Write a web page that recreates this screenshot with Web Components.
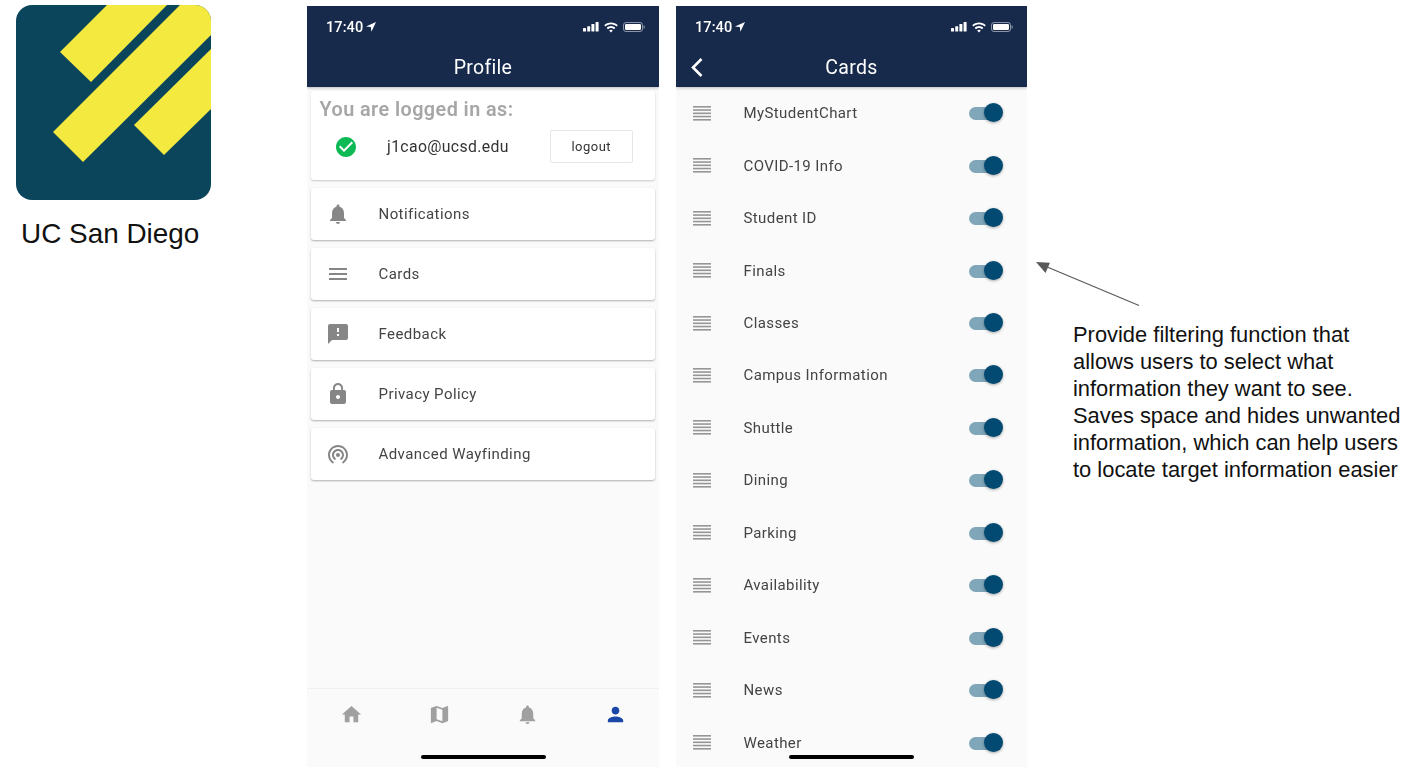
<!DOCTYPE html>
<html lang="en"><head><meta charset="utf-8"><title>UC San Diego app</title>
<style>html,body{margin:0;background:#fff;overflow:hidden}</style></head>
<body>
<demo-page>
  <logo-panel>UC San Diego</logo-panel>
  <phone-screen title="Profile">
    <login-card email="j1cao@ucsd.edu"></login-card>
    <menu-card icon="bell">Notifications</menu-card>
    <menu-card icon="menu">Cards</menu-card>
    <menu-card icon="feedback">Feedback</menu-card>
    <menu-card icon="lock">Privacy Policy</menu-card>
    <menu-card icon="tether">Advanced Wayfinding</menu-card>
    <bottom-nav slot="footer"></bottom-nav>
  </phone-screen>
  <phone-screen title="Cards" back list>
    <card-row>MyStudentChart</card-row>
    <card-row>COVID-19 Info</card-row>
    <card-row>Student ID</card-row>
    <card-row>Finals</card-row>
    <card-row>Classes</card-row>
    <card-row>Campus Information</card-row>
    <card-row>Shuttle</card-row>
    <card-row>Dining</card-row>
    <card-row>Parking</card-row>
    <card-row>Availability</card-row>
    <card-row>Events</card-row>
    <card-row>News</card-row>
    <card-row>Weather</card-row>
  </phone-screen>
  <side-note>Provide filtering function that<br>allows users to select what<br>information they want to see.<br>Saves space and hides unwanted<br>information, which can help users<br>to locate target information easier</side-note>
</demo-page>
<script>
const P={
bell:'M12 22c1.1 0 2-.9 2-2h-4c0 1.1.89 2 2 2zm6-6v-5c0-3.07-1.64-5.64-4.5-6.32V4c0-.83-.67-1.5-1.5-1.5s-1.5.67-1.5 1.5v.68C7.63 5.36 6 7.92 6 11v5l-2 2v1h16v-1l-2-2z',
menu:'M3 18h18v-2H3v2zm0-5h18v-2H3v2zm0-7v2h18V6H3z',
feedback:'M20 2H4c-1.1 0-1.99.9-1.99 2L2 22l4-4h14c1.1 0 2-.9 2-2V4c0-1.1-.9-2-2-2zm-7 12h-2v-2h2v2zm0-4h-2V6h2v4z',
lock:'M18 8h-1V6c0-2.76-2.24-5-5-5S7 3.24 7 6v2H6c-1.1 0-2 .9-2 2v10c0 1.1.9 2 2 2h12c1.1 0 2-.9 2-2V10c0-1.1-.9-2-2-2zm-6 9c-1.1 0-2-.9-2-2s.9-2 2-2 2 .9 2 2-.9 2-2 2zm3.1-9H8.9V6c0-1.71 1.39-3.1 3.1-3.1 1.71 0 3.1 1.39 3.1 3.1v2z',
tether:'M12 11c-1.1 0-2 .9-2 2s.9 2 2 2 2-.9 2-2-.9-2-2-2zm6 2c0-3.31-2.69-6-6-6s-6 2.69-6 6c0 2.22 1.21 4.15 3 5.19l1-1.74c-1.19-.7-2-1.97-2-3.45 0-2.21 1.79-4 4-4s4 1.79 4 4c0 1.48-.81 2.75-2 3.45l1 1.74c1.79-1.04 3-2.97 3-5.19zM12 3C6.48 3 2 7.48 2 13c0 3.7 2.01 6.92 4.99 8.65l1-1.73C5.61 18.53 4 15.96 4 13c0-4.42 3.58-8 8-8s8 3.58 8 8c0 2.96-1.61 5.53-4 6.92l1 1.73c2.99-1.73 5-4.95 5-8.65 0-5.52-4.48-10-10-10z',
home:'M10 20v-6h4v6h5v-8h3L12 3 2 12h3v8z',
map:'M20.5 3l-.16.03L15 5.1 9 3 3.36 4.9c-.21.07-.36.25-.36.48V20.5c0 .28.22.5.5.5l.16-.03L9 18.9l6 2.1 5.64-1.9c.21-.07.36-.25.36-.48V3.5c0-.28-.22-.5-.5-.5zM15 19l-6-2.11V5l6 2.11V19z',
person:'M12 12c2.21 0 4-1.79 4-4s-1.79-4-4-4-4 1.79-4 4 1.79 4 4 4zm0 2c-2.67 0-8 1.34-8 4v2h16v-2c0-2.66-5.33-4-8-4z',
check:'M12 2C6.48 2 2 6.48 2 12s4.48 10 10 10 10-4.48 10-10S17.52 2 12 2zm-2 15l-5-5 1.41-1.41L10 14.17l7.59-7.59L19 8l-9 9z'
};
const def=(n,html,init)=>customElements.define(n,class extends HTMLElement{
  constructor(){super();this.attachShadow({mode:'open'}).innerHTML=typeof html==='function'?html(this):html;}
  connectedCallback(){if(init)init(this,this.shadowRoot);}
});
def('m-icon',`<style>:host{display:block;width:24px;height:24px;fill:currentColor}svg{display:block;width:100%;height:100%}</style><svg viewBox="0 0 24 24"><path></path></svg>`,
 (h,s)=>s.querySelector('path').setAttribute('d',P[h.getAttribute('name')]));
def('demo-page',`<style>:host{display:flex;align-items:flex-start;width:1409px;height:781px;overflow:hidden;position:relative}
::slotted(phone-screen){margin-top:6px}</style><slot></slot>`);
def('logo-panel',`<style>:host{display:block;flex:none;width:307px;box-sizing:border-box;padding:5px 0 0 16px;font:27.9px/34px "Liberation Sans",Arial,sans-serif;color:#111}
svg{display:block;width:195px;height:195px}p{margin:17px 0 0 5px;white-space:nowrap}</style>
<svg viewBox="16 5 195 195"><defs><clipPath id="c"><rect x="16" y="5" width="195" height="195" rx="16"/></clipPath></defs>
<g clip-path="url(#c)"><rect x="16" y="5" width="195" height="195" fill="#0a455c"/>
<g fill="#f4ea3f"><polygon points="107,5 167,5 91,82 60,52"/><polygon points="180,5 211,5 211,35 83,162 53,132"/><polygon points="211,49 211,109 164,155 134,125"/></g></g></svg><p><slot></slot></p>`);
def('status-bar',`<style>:host{display:flex;align-items:center;height:42px;padding:0 13.5px 0 19px;box-sizing:border-box;color:#fff;font:500 14.5px Roboto,sans-serif}
span{letter-spacing:.1px}svg{display:block}.l{margin-left:3px}.r{margin-left:auto}</style>
<span>17:40</span>
<svg class="l" width="10" height="10" viewBox="0 0 10 10"><path d="M10 0 0 4.400l4.800.6.6 4.800z" fill="#fff"/></svg>
<svg class="r" width="63" height="12" viewBox="0 0 63 12" fill="#fff">
<rect x="0" y="7" width="3" height="3.5" rx=".6"/><rect x="4.2" y="5.2" width="3" height="5.3" rx=".6"/><rect x="8.4" y="3" width="3" height="7.500" rx=".6"/><rect x="12.600" y="1" width="3" height="9.500" rx=".6"/>
<path d="M28 1.400c-2.700 0-5 1-6.800 2.800l1.300 1.400c1.400-1.400 3.300-2.300 5.500-2.300s4.100.9 5.500 2.300l1.300-1.400C33 2.400 30.700 1.400 28 1.400zm0 3.700c-1.700 0-3.200.7-4.300 1.800l1.300 1.400c.8-.8 1.800-1.200 3-1.200s2.200.4 3 1.200l1.300-1.400c-1.100-1.100-2.600-1.800-4.300-1.800zm0 3.600c-.7 0-1.300.3-1.800.8l1.800 1.900 1.800-1.900c-.5-.5-1.100-.8-1.800-.8z"/>
<rect x="40.500" y="1.500" width="19" height="9" rx="2.500" fill="none" stroke="#fff" stroke-opacity=".5"/><rect x="42" y="3" width="16" height="6" rx="1.300"/><rect x="60.500" y="4.500" width="1.200" height="3" rx=".6" opacity=".5"/></svg>`);
def('app-header',h=>`<style>:host{display:block;flex:none;height:81px;background:#172a4b;color:#fff;position:relative;z-index:1;box-shadow:0 1px 3px rgba(0,0,0,.25)}
.t{display:flex;align-items:center;justify-content:center;height:39px;font:400 19.500px Roboto,sans-serif;letter-spacing:.3px;position:relative}
svg{position:absolute;left:14px;top:9px}</style><status-bar></status-bar>
<div class="t">${h.hasAttribute('back')?'<svg width="14" height="21" viewBox="0 0 14 21"><path d="M11.500 2 3 10.500 11.500 19" fill="none" stroke="#fff" stroke-width="2.600"/></svg>':''}<span>${h.getAttribute('title')}</span></div>`);
def('phone-screen',h=>`<style>:host{display:flex;flex-direction:column;flex:none;width:352px;height:761px;background:#fafafa;position:relative;overflow:hidden;margin-right:17px;filter:blur(.35px)}
:host([list]){width:351px;margin-right:0}
.body{flex:1;min-height:0;display:flex;flex-direction:column;gap:8px;padding:4px 4px 0;overflow:hidden}
:host([list]) .body{gap:0;padding:0}
.bar{position:absolute;left:50%;margin-left:-62.500px;bottom:8px;width:125.500px;height:4px;border-radius:2px;background:#000;z-index:2}
:host([list]) .bar{margin-left:-63px}</style>
<app-header title="${h.getAttribute('title')}" ${h.hasAttribute('back')?'back':''}></app-header>
<div class="body"><slot></slot></div><slot name="footer"></slot><div class="bar"></div>`);
def('login-card',h=>`<style>:host{display:block;flex:none;height:89px;box-sizing:border-box;background:#fff;border-radius:3px;box-shadow:0 1px 2px rgba(0,0,0,.2);font-family:Roboto,sans-serif}
h2{margin:0;padding:8px 0 0 8.500px;font:600 19.800px/22px Roboto,sans-serif;color:#a6a6a6;letter-spacing:.45px;white-space:nowrap}
.row{display:flex;align-items:center;margin-top:9px;height:33px}
m-icon{color:#0cb954;margin-left:22.500px}
.e{margin-left:29.500px;font-size:15.800px;letter-spacing:.35px;color:#333}
button{margin:0 22px 0 auto;width:83.500px;height:33.500px;background:#fff;border:1px solid #e6e6e6;border-radius:2px;font:400 13px Roboto,sans-serif;letter-spacing:.5px;color:#333;padding:0}</style>
<h2>You are logged in as:</h2><div class="row"><m-icon name="check"></m-icon><span class="e">${h.getAttribute('email')}</span><button>logout</button></div>`);
def('menu-card',h=>`<style>:host{display:flex;align-items:center;flex:none;height:52px;background:#fff;border-radius:3px;box-shadow:0 1px 2px rgba(0,0,0,.3);font:400 15px Roboto,sans-serif;letter-spacing:.43px;color:#444}
m-icon{margin:0 29px 0 14.500px;color:#868686}</style><m-icon name="${h.getAttribute('icon')}"></m-icon><slot></slot>`);
def('bottom-nav',`<style>:host{display:flex;flex:none;height:79px;border-top:1px solid #f1f1f1;box-sizing:border-box;justify-content:space-between;padding:13px 32px 0}
m-icon{color:#a0a0a0;width:23px;height:23px;margin:.5px}m-icon:first-child{width:22px;height:22px;margin:1px}m-icon:last-child{color:#1a46a8}</style>
<m-icon name="home"></m-icon><m-icon name="map"></m-icon><m-icon name="bell"></m-icon><m-icon name="person"></m-icon>`);
def('toggle-switch',`<style>:host{display:block;position:relative;width:34px;height:20px;flex:none}
.t{position:absolute;left:0;right:3px;top:4px;height:13px;border-radius:7px;background:#7fa6b9}
.k{position:absolute;right:0;top:0;width:19px;height:19px;border-radius:50%;background:#024a72;box-shadow:0 1px 3px rgba(0,0,0,.35)}</style><div class="t"></div><div class="k"></div>`);
def('card-row',`<style>:host{display:flex;align-items:center;flex:none;height:52.460px;padding:0 24px 0 17px;font:400 15px Roboto,sans-serif;letter-spacing:.4px;color:#444}
svg{flex:none;margin-right:32.500px}span{flex:1}</style>
<svg width="18" height="15" viewBox="0 0 18 15" fill="#969696"><rect y="0" width="18" height="1.600"/><rect y="3.250" width="18" height="1.600"/><rect y="6.500" width="18" height="1.600"/><rect y="9.750" width="18" height="1.600"/><rect y="13" width="18" height="1.600"/></svg>
<span><slot></slot></span><toggle-switch></toggle-switch>`);
def('side-note',`<style>:host{display:block;flex:none;width:336px;margin-left:46px;padding-top:320.500px;font:21.900px/27px "Liberation Sans",Arial,sans-serif;color:#111;position:relative;white-space:nowrap}
p{margin:0}svg{position:absolute;left:-46px;top:250px}</style>
<svg width="120" height="60" viewBox="1027 250 120 60"><path d="M1139 305.500 1046 266.500" stroke="#595959" stroke-width="1.200" fill="none"/><polygon points="1036,262 1050,262.800 1045.500,273" fill="#595959"/></svg><p><slot></slot></p>`);
</script>
</body></html>
